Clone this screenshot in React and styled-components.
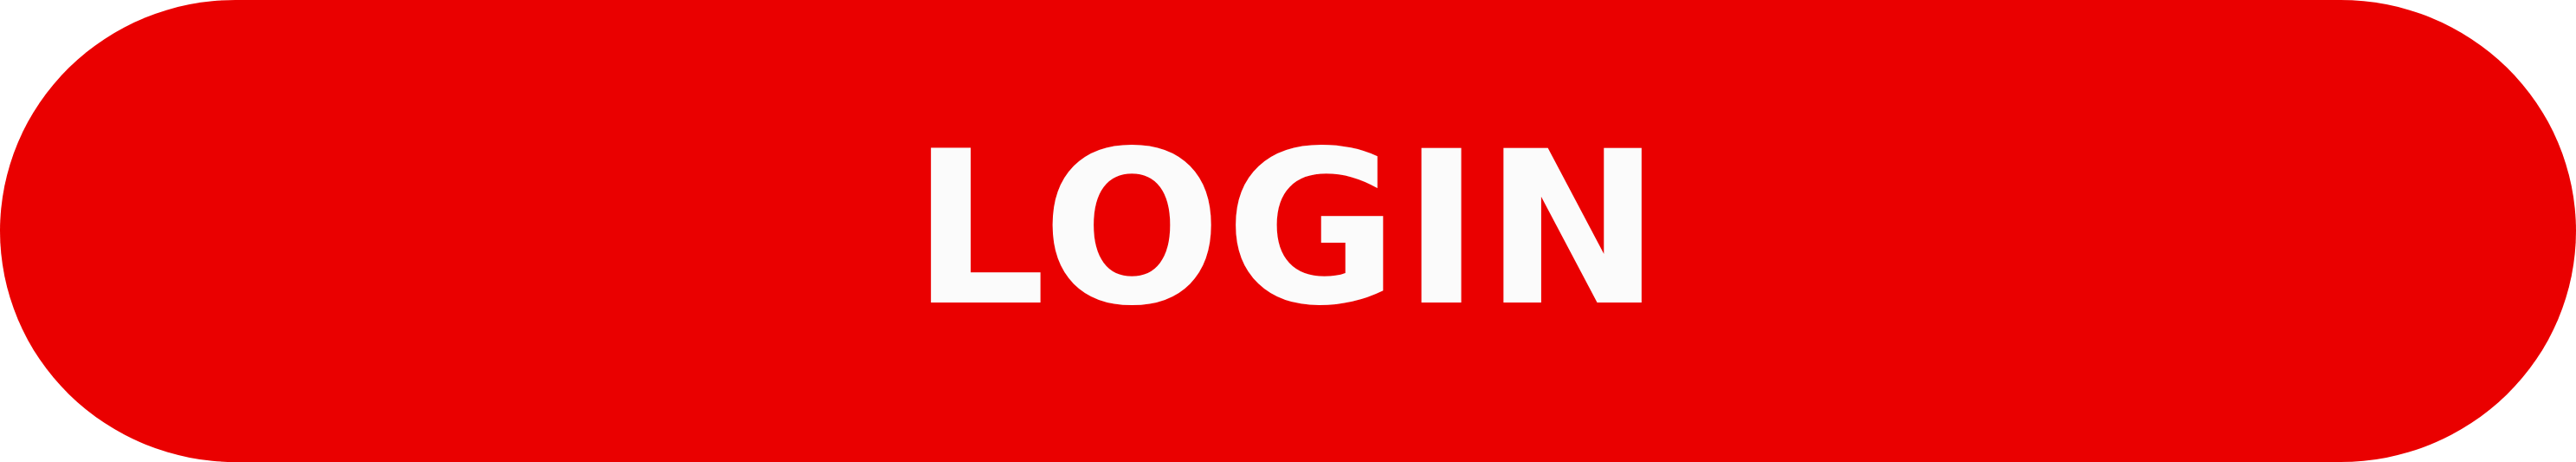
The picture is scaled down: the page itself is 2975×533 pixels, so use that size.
import React from "react";
import styled, { createGlobalStyle } from "styled-components";

const Global = createGlobalStyle`
  html, body {
    margin: 0;
    padding: 0;
    background: #ffffff;
  }
  #root {
    width: 2975px;
    height: 533px;
  }
`;

const Button = styled.button`
  box-sizing: border-box;
  width: 2975px;
  height: 533px;
  margin: 0;
  padding: 0 0 4px 0;
  border: none;
  border-radius: 272px / 266.5px;
  background: #ea0000;
  display: flex;
  align-items: center;
  justify-content: center;
  cursor: pointer;
`;

const Label = styled.span`
  font-family: "DejaVu Sans", "Noto Sans", sans-serif;
  font-weight: 700;
  font-size: 244px;
  line-height: 1;
  letter-spacing: 4px;
  color: #fbfbfb;
`;

export default function App() {
  return (
    <>
      <Global />
      <Button type="button">
        <Label>LOGIN</Label>
      </Button>
    </>
  );
}
